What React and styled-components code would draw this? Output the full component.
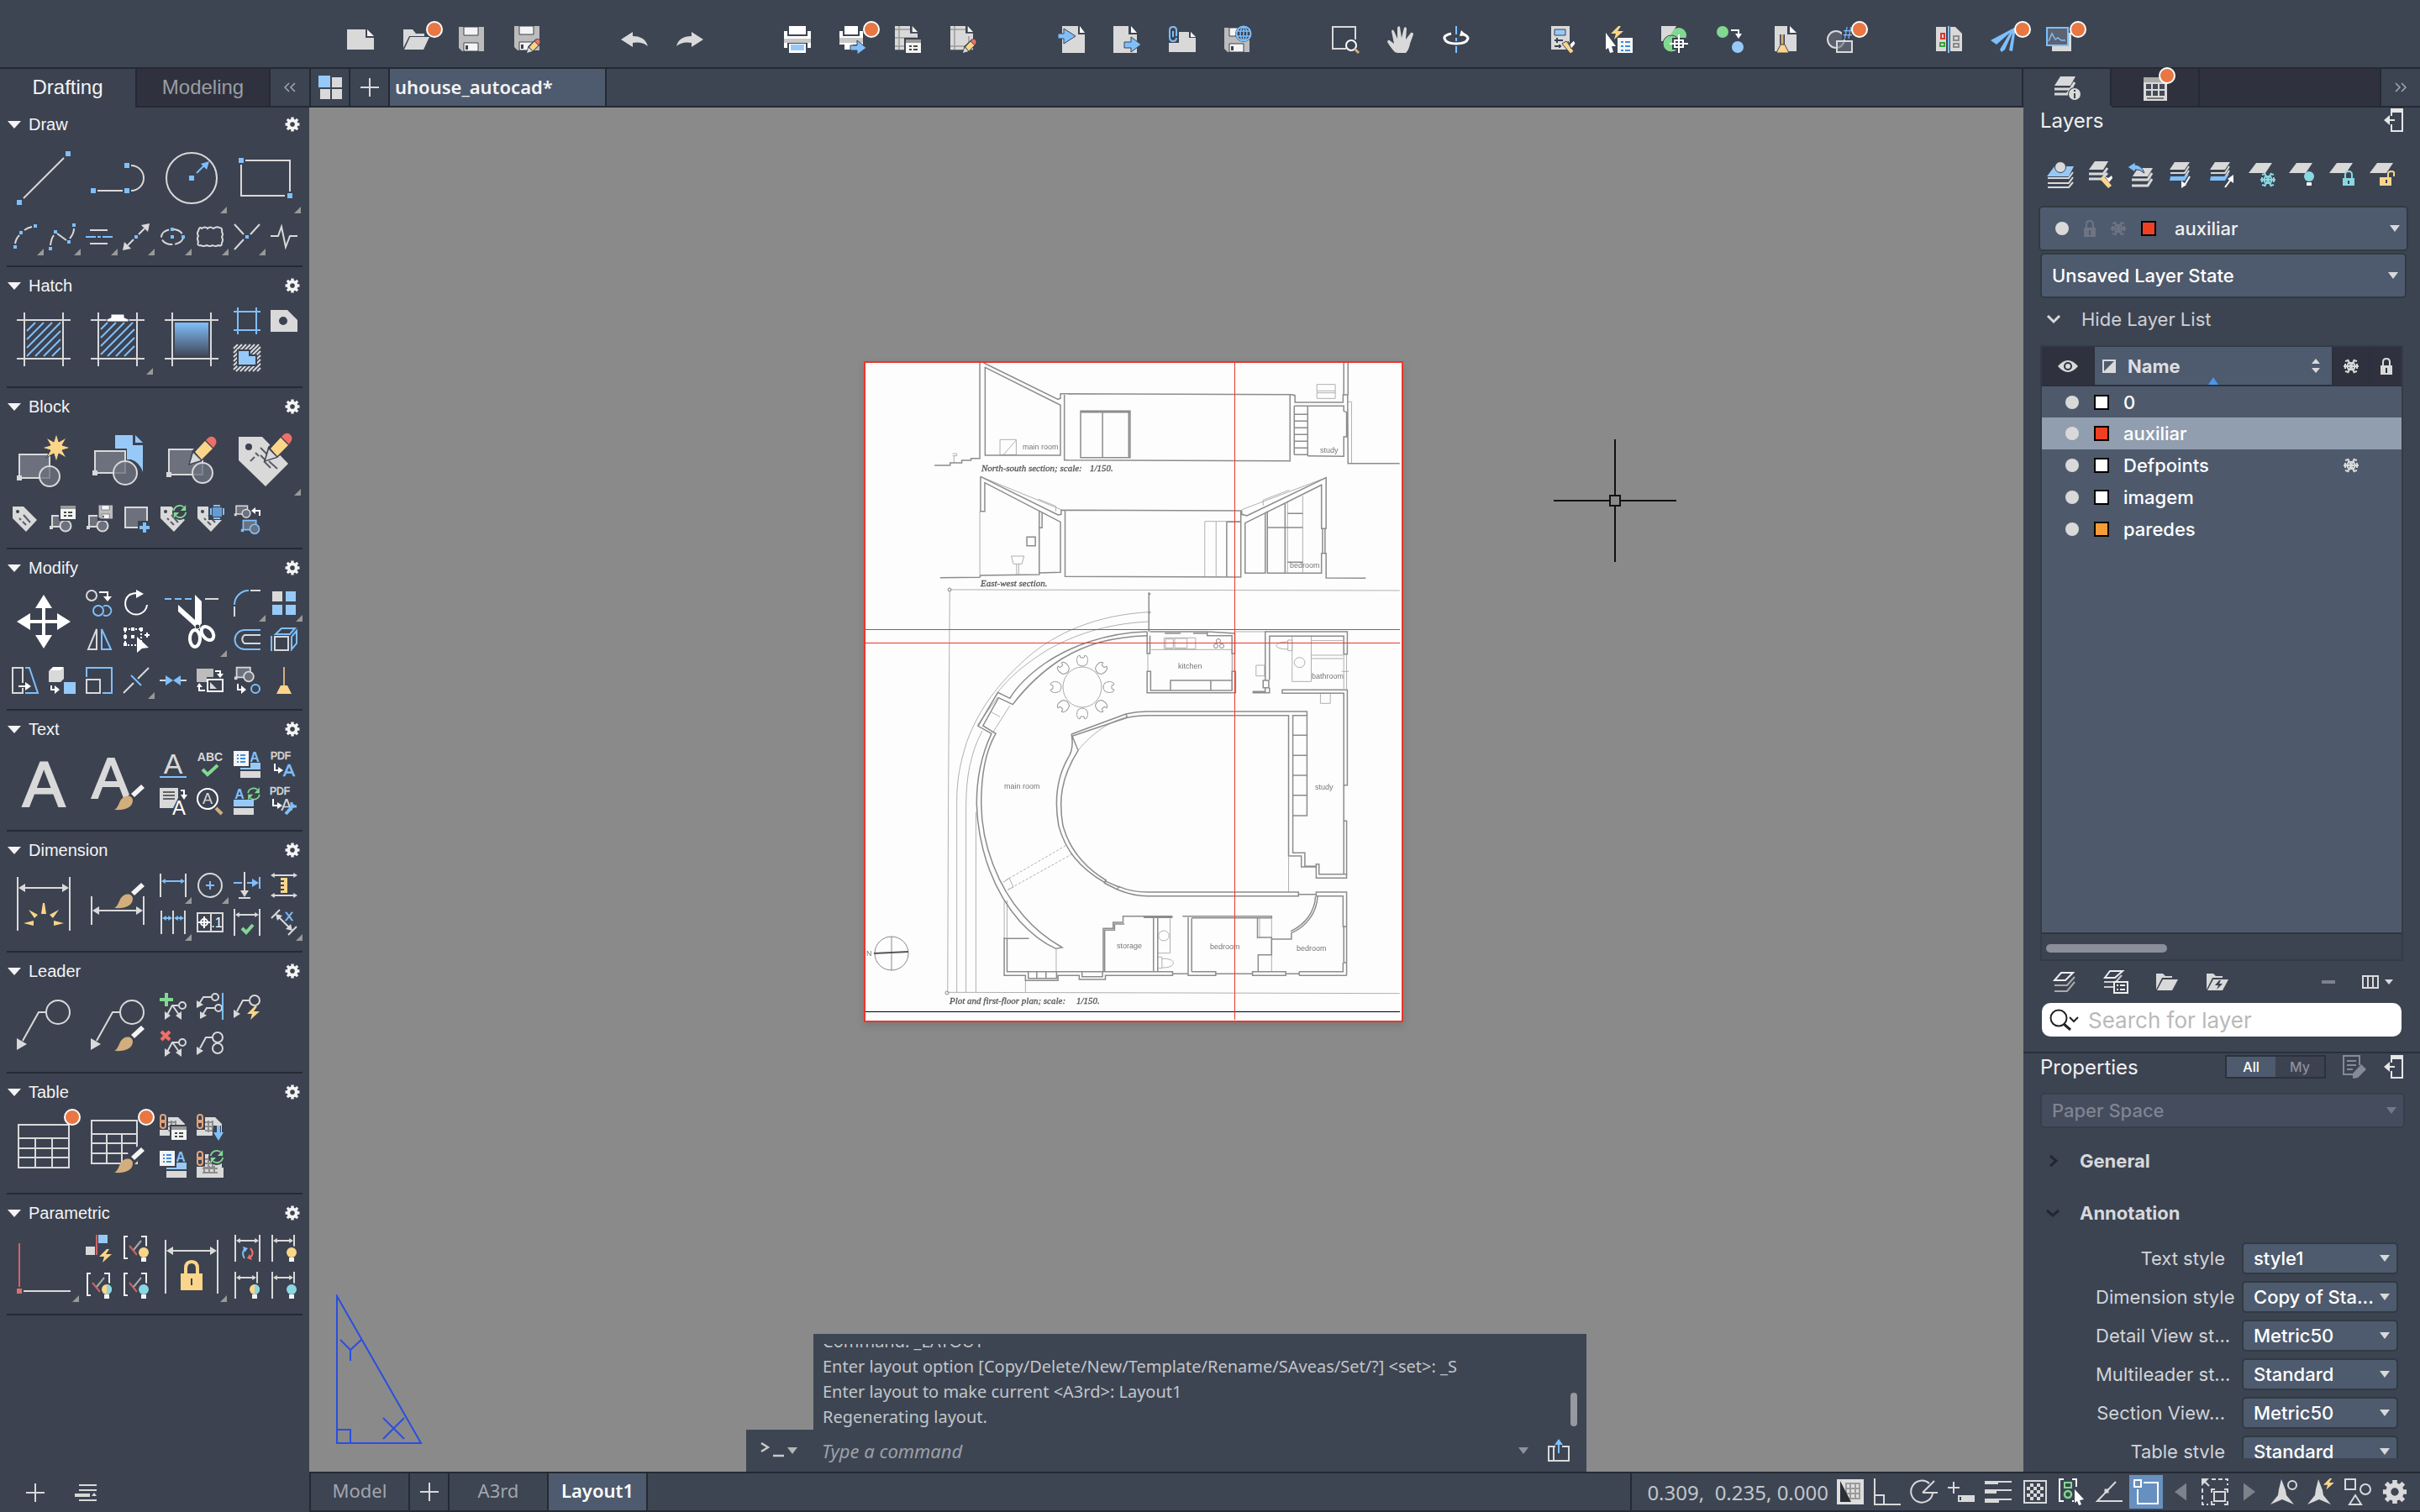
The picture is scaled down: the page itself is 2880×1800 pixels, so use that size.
import React from "react";
import styled, { createGlobalStyle } from "styled-components";

const G = "#d9d9d9";
const B = "#7fbffa";
const L = "#97c9f8";
const W = "#ffffff";
const Y = "#fad58a";
const GR = "#82d891";
const R = "#ee6f6a";
const F = "#6c717d";
const D = "#3c4250";
const T = "#8ad7e2";
const TAN = "#d2ae7c";

/* ---------- drawing helpers ---------- */

const Ln = ({ d, c = G, w = 2, ...rest }) => (
  <path d={d} fill="none" stroke={c} strokeWidth={w} {...rest} />
);
const Fl = ({ d, c = G, ...rest }) => <path d={d} fill={c} {...rest} />;
const Dot = ({ x, y, s = 4, c = B }) => (
  <rect x={x - s / 2} y={y - s / 2} width={s} height={s} fill={c} />
);
const Ltr = ({ x, y, s, c = G, w = 400, children, ...rest }) => (
  <text x={x} y={y} fontSize={s} fontWeight={w} fill={c} textAnchor="middle" fontFamily="Liberation Sans, sans-serif" {...rest}>
    {children}
  </text>
);
const HArrow = ({ x1, x2, y, c = G, h = 4 }) => (
  <>
    <Ln d={`M${x1 + h} ${y}H${x2 - h}`} c={c} />
    <Fl d={`M${x1} ${y}l${h * 1.6} ${-h}v${h * 2}zM${x2} ${y}l${-h * 1.6} ${-h}v${h * 2}z`} c={c} />
  </>
);
const Pencil = ({ t }) => (
  <g transform={t}>
    <Fl d="M-2 34L3 16L21 -1Q28 -4 33 2Q36 8 31 13L14 29Z" c={D} />
    <Fl d="M0 32L4 19L13 28Z" c={G} />
    <Fl d="M6 18L18 5L27 14L14 27Z" c={Y} />
    <Fl d="M19 4L22 1Q27 -2 30 2Q33 6 30 10L28 13Z" c={R} />
  </g>
);
const Brush = ({ t }) => (
  <g transform={t}>
    <Fl d="M19 10L32 -2L38 3L24 18Z" c={D} />
    <Fl d="M0 30C6 27 5 19 11 15C16 12 22 14 22 19C22 27 13 31 0 30Z" c={TAN} />
    <Fl d="M20 11L32 0L36 4L24 15Z" c="#f4f4f4" />
  </g>
);
const Bulb = ({ x, y, c = Y, c2 }) => (
  <g transform={`translate(${x} ${y})`}>
    <circle r="8" fill={D} />
    <circle r="6" fill={c} />
    {c2 && <path d="M0 -6A6 6 0 0 1 0 6Z" fill={c2} />}
    <rect x="-3" y="6" width="6" height="5" fill="#f4f4f4" />
  </g>
);
const Refresh = ({ x, y, a = GR, b = GR, s = 1 }) => (
  <g transform={`translate(${x} ${y}) scale(${s})`}>
    <Ln d="M-8 -1A8 8 0 0 1 5 -6" c={a} />
    <Fl d="M8 -9V-1H1Z" c={a} />
    <Ln d="M8 1A8 8 0 0 1 -5 6" c={b} />
    <Fl d="M-8 9V1H-1Z" c={b} />
  </g>
);
const Bolt = ({ t }) => <Fl d="M9 0L0 9H6L4 16L15 6H8L12 0Z" c={Y} transform={t} />;
const Page = ({ t }) => (
  <g transform={t}>
    <Fl d="M0 0H20V10H30V32H0Z" />
    <Fl d="M23 0L30 8H23Z" c="#f4f4f4" />
  </g>
);
const Snow = ({ c = G }) => (
  <g stroke={c} strokeWidth="2" fill="none">
    <path d="M-9 0H9M-4 -8L4 8M4 -8L-4 8" />
    <path d="M-5 0L-3 -4H3L5 0L3 4H-3Z" />
    <path d="M-7 -3V3M7 -3V3M-7 -6L-3 -7M7 -6L3 -7M-7 6L-3 7M7 6L3 7" />
  </g>
);
const Tag = ({ t, hole = 2 }) => (
  <g transform={t}>
    <Fl d="M1 1H14L30 17L17 31L1 15Z" />
    <circle cx="7" cy="7" r={hole} fill={D} />
    <Ln d="M9 15L11 17M13 19L17 23M14 11L22 20" c="#595d68" />
  </g>
);
const MiniBlock = ({ t, c = G }) => (
  <g transform={t}>
    <Ln d="M4 3H22V16H4Z" c={c} fill={F} />
    <circle cx="20" cy="15" r="6.5" fill={F} stroke={c} strokeWidth="2" />
    <Dot x={3} y={17} s={4} c={c} />
  </g>
);
const Palette = ({ t }) => (
  <g transform={t}>
    <rect x="-2" y="-2" width="22" height="20" fill={D} />
    <rect width="18" height="16" fill="#f4f4f4" />
    <rect width="18" height="4" fill="#999" />
    <Ln d="M4 8H7M9 8H14M4 12H7M9 12H14" c="#4a4a4a" />
  </g>
);
const Floppy = ({ t }) => (
  <g transform={t}>
    <Fl d="M1 1H31V30H5L1 26Z" c="#bcbcbc" />
    <Fl d="M7 1H24V11H7Z" c="#f4f4f4" stroke={D} />
    <Fl d="M7 20H24V30H7Z" c="#f4f4f4" stroke={D} />
    <Fl d="M9 23H12V28H9Z" c={D} />
  </g>
);

const Frame = () => <Ln d="M9 0V64M55 0V64M0 9H64M0 55H64" />;
const hatchLines = (from, step) => {
  let d = "";
  for (let c = from; c < 102; c += step) {
    const a = Math.max(12, c - 52);
    const b = Math.min(52, c - 12);
    d += `M${a} ${b}L${b} ${a}`;
  }
  return d;
};
const Leader = () => (
  <>
    <circle cx="49" cy="17" r="14" fill="none" stroke={G} strokeWidth="2" />
    <Ln d="M34 17H26L7 51" />
    <Fl d="M0 62V48L12 55Z" />
  </>
);
const MiniLeader = ({ t }) => (
  <g transform={t}>
    <circle cx="27" cy="8" r="4" fill="none" stroke={G} strokeWidth="2" />
    <Ln d="M22 8H15L9 19M16 9L23 19" />
    <Fl d="M6 25V15L13 20ZM26 25L19 20L26 15Z" />
  </g>
);
const OneLeader = ({ t, r = 4 }) => (
  <g transform={t}>
    <circle cx="22" cy="5" r={r} fill="none" stroke={G} strokeWidth="2" />
    <Ln d="M17 5H8L3 13" />
    <Fl d="M0 18V9L8 14Z" />
  </g>
);
const Bracket = ({ bulb, half }) => (
  <>
    <Ln d="M6 2H2V28H6M22 2H28V14" c="#eee" />
    <Ln d="M8 13L17 24" c="#cf6461" />
    <Ln d="M13 18L22 7" c="#aaa" />
    <Bulb x={25} y={21} c={bulb} c2={half} />
  </>
);
const DimBulb = ({ bulb, half }) => (
  <>
    <Ln d="M2 0V32M28 0V14" />
    <HArrow x1={3} x2={27} y={7} h={3} />
    <Bulb x={25} y={21} c={bulb} c2={half} />
  </>
);
const Calc = ({ children }) => (
  <>
    <Fl d="M10 4H22L30 12V26H0V19H10Z" />
    <Ln d="M10 10H19M10 15H19M10 20H19M14 8V22M19 8V22" c="#8d8d8d" />
    <rect x="-1" y="-1" width="10" height="20" rx="4" fill={D} />
    <rect x="1" y="1" width="6" height="9" rx="3" fill="none" stroke="#e2a47c" strokeWidth="2" />
    <rect x="1" y="8" width="6" height="9" rx="3" fill="none" stroke="#e2a47c" strokeWidth="2" />
    {children}
  </>
);
const TextBars = ({ t }) => (
  <g transform={t}>
    <Ltr x={25} y={13} s={16} c={B} w={700}>A</Ltr>
    <Fl d="M8 14H32V22H8Z" c={L} />
    <Fl d="M8 24H32V32H8Z" />
    <rect width="20" height="20" fill={D} />
    <rect width="18" height="18" fill="#f4f4f4" />
    <Ln d="M4 5H6M8 5H14M4 9H6M8 9H14M4 13H6M8 13H14" c="#3d8ee0" />
  </g>
);
const Sheet = ({ c = G, x = 0, y = 0 }) => <Fl d={`M${x + 9} ${y}H${x + 28}L${x + 20} ${y + 12}H${x}Z`} c={c} />;
const Sheets = ({ top = G, bottom = G }) => (
  <>
    <Fl d="M8 1H26L20 10H2Z" c={top} />
    <Ln d="M25 6L20 14H3M25 11L20 19H3" />
    <Fl d="M3 18H19L25 15L20 23H2Z" c={bottom} />
  </>
);

/* ---------- tool glyphs, 64 or 32 units wide ---------- */

const art = {
  line: <><Ln d="M8 56L56 8" /><Dot x={3} y={61} s={6} /><Dot x={61} y={3} s={6} /></>,
  polyline: <><Ln d="M8 47H38M48 17A15 15 0 0 1 48 47" /><Dot x={3} y={47} s={6} /><Dot x={43} y={47} s={6} /><Dot x={43} y={17} s={6} /></>,
  circle: <><circle cx="32" cy="32" r="30" fill="none" stroke={G} strokeWidth="2" /><Dot x={32} y={32} s={6} /><Ln d="M38 26L47 17" c={B} /><Fl d="M53 12L50 22L43 15Z" c={B} /></>,
  rect: <><Ln d="M8 11H61V48M3 16V53H55" /><Dot x={3} y={11} s={6} /><Dot x={61} y={53} s={6} /></>,
  arc: <><Ln d="M4 24Q5 18 9 14M15 8Q19 5 24 4" /><Dot x={4} y={28} /><Dot x={11} y={11} /><Dot x={28} y={3} /></>,
  spline: <><Ln d="M2 26Q3 18 6 14M10 12L21 20M25 18Q30 12 30 6" /><Dot x={2} y={30} /><Dot x={8} y={10} /><Dot x={24} y={22} /><Dot x={30} y={2} /></>,
  xline: <><Ln d="M5 8H26M5 24H26" /><Ln d="M0 16H12M14 16H18M20 16H32" c={B} /></>,
  ray: <><Ln d="M6 26L13 19M19 13L26 6" /><Fl d="M0 32L2 22L10 30ZM32 0L30 10L22 2Z" /><Dot x={16} y={16} /></>,
  ellipse: <><ellipse cx="15" cy="16" rx="13" ry="9" fill="none" stroke={G} strokeWidth="2" strokeDasharray="14 3" /><Dot x={15} y={16} /><Dot x={15} y={7} /><Dot x={28} y={16} /></>,
  cloud: <Ln d="M3 6Q4 4 6 6Q10 3 13 6Q16 3 20 6Q24 3 27 5Q31 5 30 10Q32 13 30 16Q32 20 30 23Q30 28 26 26Q22 28 19 26Q16 28 12 26Q8 28 5 26Q0 27 2 22Q0 18 2 15Q0 11 2 9Z" />,
  ex: <><Ln d="M1 1L12 13M31 1L20 13M1 31L12 19" /><Dot x={16} y={16} /></>,
  breakline: <Ln d="M0 15H9L13 4L18 28L23 15H32" />,

  hatch: <><Frame /><Ln d={hatchLines(34, 10)} c={B} /></>,
  hatch2: <><Frame /><Fl d="M19 11V8L24 6V2H40V6L45 8V11Z" c={W} stroke={D} strokeWidth="1" /><Ln d={hatchLines(32, 10)} c={B} /></>,
  gradient: (
    <>
      <defs>
        <linearGradient id="fade" x1="0" y1="0" x2="0" y2="1">
          <stop offset="0" stopColor={B} />
          <stop offset="1" stopColor="#414857" />
        </linearGradient>
      </defs>
      <Frame />
      <rect x="12" y="12" width="40" height="40" fill="url(#fade)" />
    </>
  ),
  boundary: <Ln d="M5 0V32M27 0V32M0 5H32M0 27H32" c={B} />,
  wipeout: <Fl d="M0 3H20L32 15V29H0ZM15 11A5 5 0 1 0 15 21A5 5 0 1 0 15 11Z" fillRule="evenodd" />,
  region: (
    <>
      <Ln d="M0 5L5 0M0 10L10 0M0 15L15 0M0 20L20 0M0 25L25 0M0 30L30 0M3 32L32 3M8 32L32 8M13 32L32 13M18 32L32 18M23 32L32 23M28 32L32 28" />
      <Fl d="M4 6H20V12H28V26H4Z" c={D} />
      <Fl d="M6 8H18V14H26V24H6Z" c={L} />
    </>
  ),

  insert: (
    <>
      <Ln d="M3 25H39V53H3Z" fill={F} />
      <Dot x={3} y={53} s={6} c={G} />
      <circle cx="39" cy="51" r="12" fill={F} fillOpacity=".8" stroke={G} strokeWidth="2" />
      <Fl d="M47 0L50 10L59 5L54 14L64 17L54 20L59 29L50 24L47 34L44 24L35 29L40 20L30 17L40 14L35 5L44 10Z" c={Y} stroke={D} strokeWidth="1" />
    </>
  ),
  create: (
    <>
      <Fl d="M29 2H50V14H62V46Q58 34 48 31H43V18H29Z" c={L} />
      <Fl d="M53 2L62 11H53Z" c={L} />
      <Ln d="M5 21H41V47H5Z" fill={F} />
      <Dot x={5} y={47} s={6} c={G} />
      <circle cx="41" cy="47" r="14" fill={F} fillOpacity=".8" stroke={G} strokeWidth="2" />
    </>
  ),
  editblock: (
    <>
      <Ln d="M5 19H45V49H5Z" fill={F} />
      <Dot x={5} y={49} s={6} c={G} />
      <circle cx="45" cy="47" r="12" fill={F} fillOpacity=".8" stroke={G} strokeWidth="2" />
      <Pencil t="translate(30 4)" />
    </>
  ),
  attredit: (
    <>
      <Fl d="M0 4H28L59 36L32 63L0 32Z" />
      <circle cx="12" cy="16" r="4" fill={D} />
      <Ln d="M26 17L34 25M20 23L24 27M30 33L38 41M14 33L19 28M26 26L32 32M36 33L46 42" c="#595d68" />
      <Pencil t="translate(32 0)" />
    </>
  ),
  tag: <Tag />,
  blockpal: <><MiniBlock t="translate(0 9)" /><Palette t="translate(14 0)" /></>,
  blocksave: <><MiniBlock t="translate(0 9)" /><rect x="14" y="-2" width="20" height="20" fill={D} /><Floppy t="translate(15 -1) scale(.55)" /></>,
  blockadd: <><Ln d="M3 2H29V26H3Z" fill={F} /><Fl d="M18 18H33V33H18Z" c={D} /><Ln d="M26 20V32M20 26H32" c={B} w={4} /></>,
  tagsync: <><Tag /><circle cx="24" cy="8" r="9" fill={D} /><Refresh x={24} y={7} s={0.9} /></>,
  tagsel: <><Tag /><rect x="14" y="-1" width="20" height="18" fill={D} /><rect x="19" y="2" width="11" height="11" fill="#659bd3" /><Ln d="M20 0H28M20 15H28M17 3V11M32 3V11" c={B} /></>,
  blockswap: <><g transform="translate(0 -2) scale(.75)"><MiniBlock /></g><Ln d="M31 12V6H26" c={W} /><Fl d="M21 6L26 2V10Z" c={W} /><MiniBlock t="translate(8 15) scale(.85)" c={B} /></>,

  move: <><Ln d="M32 12V52M12 32H52" c={W} w={4} /><Fl d="M32 0L42 16H22ZM32 64L22 48H42ZM0 32L16 22V42ZM64 32L48 42V22Z" c={W} /></>,
  copy: <><circle cx="7" cy="7" r="6" fill="none" stroke={G} strokeWidth="2" /><Ln d="M16 3H26V9" c={W} /><Fl d="M21 8H31L26 14Z" c={W} /><circle cx="15" cy="25" r="6" fill="none" stroke={B} strokeWidth="2" /><Ln d="M21 20A6 6 0 1 1 21 30" c={B} /></>,
  rotate: <><Ln d="M10 5A13 13 0 1 0 29 18" c={W} /><Ln d="M9 6Q12 4 17 4" c={W} /><Fl d="M16 0L25 5L16 10Z" c={W} /></>,
  mirror: <><Ln d="M13 3V27H3Z" /><Ln d="M19 3L30 27H19Z" c={B} /></>,
  stretchsel: <><Ln d="M3 3H22V22H3Z" c={W} strokeDasharray="2 2" /><Dot x={3} y={3} c={W} /><Dot x={12} y={3} c={W} /><Dot x={22} y={3} c={W} /><Dot x={3} y={12} c={W} /><Dot x={12} y={12} c={W} /><Dot x={3} y={21} c={W} /><Ln d="M26 10H32M29 7V13" c={W} /><Fl d="M17 12L31 25L23 26L17 31Z" c={W} /></>,
  trim: (
    <>
      <Ln d="M0 5H8M12 5H20M24 5H32" c={B} />
      <Ln d="M48 5H64" />
      <Fl d="M36 0L44 8V34L38 42L36 38L16 20V12L36 30Z" c={W} />
      <ellipse cx="36" cy="52" rx="6" ry="10" fill="none" stroke={W} strokeWidth="4" />
      <ellipse cx="51" cy="46" rx="6" ry="9" transform="rotate(-38 51 46)" fill="none" stroke={W} strokeWidth="4" />
      <circle cx="39" cy="38" r="3" fill={D} stroke={W} />
    </>
  ),
  fillet: <><Ln d="M1 18A17 17 0 0 1 18 1" c={B} /><Ln d="M20 1H32M1 20V32" /></>,
  array: <><Fl d="M2 2H14V14H2Z" /><Fl d="M18 2H30V14H18ZM2 18H14V30H2ZM18 18H30V30H18Z" c={L} /></>,
  offset: <><Ln d="M32 4H13A11 11 0 0 0 13 27H32" c={B} /><Ln d="M32 10H13A6 6 0 0 0 13 20H32" /></>,
  extrude: <><Ln d="M5 12H21V28H5Z" /><Ln d="M1 11V29M6 9L13 2H29L23 9ZM25 27V12L31 5V20Z" c={B} /></>,
  stretch: <><Ln d="M13 19V1H1V31H13V25" /><Ln d="M16 1H21L31 31H16" c={B} /><Ln d="M8 23H18" c={W} /><Fl d="M16 18L23 23L16 28Z" c={W} /></>,
  cube: <><Fl d="M0 5L5 1H18V14L14 18H0Z" /><Fl d="M1 4L5 0H18L14 4Z" c="#fff" /><Ln d="M3 22V27H8" c={W} /><Fl d="M7 22L13 27L7 32Z" c={W} /><Fl d="M18 18H32V32H18Z" c={L} /></>,
  scale: <><Ln d="M1 12V1H31V31H20" c={B} /><Ln d="M1 15H17V31H1Z" /></>,
  lengthen: <><Ln d="M1 31L13 19M18 14L31 1" /><Ln d="M10 10L22 22" c={B} /></>,
  join: <><Ln d="M0 16H8M24 16H32" /><Fl d="M7 10L16 16L7 22ZM25 10L16 16L25 22Z" c={B} /></>,
  align: <><Fl d="M0 2H20V12H12V18H0Z" c="#bcbcbc" /><Ln d="M22 5H28V9" c={W} /><Fl d="M24 8H32L28 13Z" c={W} /><Ln d="M13 15H31V29H13Z" c={W} /><Fl d="M16 18L24 26H16Z" /><Ln d="M3 23V28H10" c={W} /><Fl d="M0 24L3 19L7 24Z" c={W} /></>,
  explode: <><g transform="translate(0 -2) scale(.9)"><MiniBlock /></g><Ln d="M5 20V27H10" c={W} /><Fl d="M9 22L15 27L9 32Z" c={W} /><circle cx="26" cy="26" r="5" fill="none" stroke={B} strokeWidth="2" /></>,
  purge: <><Ln d="M16 0V22" c={TAN} /><Fl d="M12 22H20L25 32H7Z" c={Y} /></>,

  mtext: <Ltr x={32} y={60} s={76} stroke={G} strokeWidth="2">A</Ltr>,
  textstyle: <><Ltr x={24} y={50} s={68} stroke={G} strokeWidth="2">A</Ltr><path d="M40 54L60 26L66 36L44 66Z" fill={D} /><Brush t="translate(28 34)" /></>,
  textA: <><Ltr x={16} y={27} s={34} c={G}>A</Ltr><Ln d="M0 31H32" c={B} /></>,
  spell: <><Ltr x={16} y={12} s={14} w={700}>ABC</Ltr><Ln d="M7 22L13 28L25 17" c={GR} w={4} /></>,
  field: <TextBars />,
  pdftext: <><Ltr x={12} y={10} s={12} stroke={G} strokeWidth=".6">PDF</Ltr><Ln d="M5 15V23H9" c={W} /><Fl d="M9 19L15 23L9 27Z" c={W} /><Ltr x={22} y={30} s={21} c={B} stroke={B} strokeWidth=".6">A</Ltr></>,
  singletext: <><Fl d="M0 0H22V12L16 24H0Z" /><Ln d="M4 5H18M4 9H18M4 13H18" c="#5f6168" /><Ln d="M25 3H29V8" c={W} /><Fl d="M25 8H33L29 14Z" c={W} /><Ltr x={23} y={32} s={24} c={W}>A</Ltr></>,
  findtext: <><circle cx="13" cy="13" r="12" fill="none" stroke={W} strokeWidth="2" /><Ltr x={13} y={19} s={18}>A</Ltr><Ln d="M23 24L30 31" c={TAN} w={4} /></>,
  fieldupd: <><Ltr x={7} y={13} s={16} c={B} w={700}>A</Ltr><Refresh x={24} y={7} s={0.85} /><Fl d="M0 14H24V22H0Z" c={L} /><Fl d="M0 24H24V32H0Z" /></>,
  pdfset: <><Ltr x={11} y={8} s={12} stroke={G} strokeWidth=".6">PDF</Ltr><Ln d="M3 13V21H8" c={W} /><Fl d="M8 17L14 21L8 25Z" c={W} /><Ltr x={19} y={27} s={20} c={G}>A</Ltr><Ln d="M18 31L28 20" c={B} w={4} /><Ln d="M25 17V22H31" c={B} w={3} /></>,

  dim: <><Ln d="M1 0V64M63 0V64" /><HArrow x1={2} x2={62} y={13} h={5} /><Fl d="M31 31H33L35 44H29ZM14 39L25 45L21 49ZM50 39L39 45L43 49ZM8 55L20 52V58ZM56 55L44 52V58Z" c={Y} /></>,
  dimstyle: <><Ln d="M1 23V57M63 23V57" /><HArrow x1={2} x2={62} y={40} h={5} /><Brush t="translate(28 7)" /></>,
  linear: <><Ln d="M1 2V30M31 2V30" /><HArrow x1={2} x2={30} y={11} c={B} h={3} /></>,
  center: <><circle cx="16" cy="16" r="14" fill="none" stroke={G} strokeWidth="2" /><Ln d="M11 16H21M16 11V21" c={B} /></>,
  dimspace: <><Ln d="M13 0V24M6 31H20" /><Fl d="M8 22H18L13 30Z" /><Ln d="M0 13H10M16 13H26M31 6V20" c={B} /><Fl d="M22 8L30 13L22 18Z" c={B} /></>,
  dimruler: <><HArrow x1={0} x2={32} y={4} h={3} /><HArrow x1={0} x2={32} y={28} h={3} /><Fl d="M12 7H20V25H12Z" c={Y} /><Ln d="M12 11H16M12 16H16M12 21H16" c={D} /></>,
  baseline: <><Ln d="M2 2V30M16 2V30M30 2V30" /><HArrow x1={3} x2={15} y={11} c={B} h={3} /><HArrow x1={17} x2={29} y={11} c={B} h={3} /></>,
  tolerance: <><Ln d="M1 5H31V27H1ZM17 5V27" /><circle cx="9" cy="16" r="4" fill="none" stroke={W} strokeWidth="2" /><Ln d="M2 16H16M9 9V23" c={W} /><Ltr x={24} y={22} s={16} c={W}>.1</Ltr></>,
  inspect: <><Ln d="M1 0V32M31 0V32" /><HArrow x1={2} x2={30} y={7} h={3} /><Ln d="M10 23L15 28L23 19" c={GR} w={4} /></>,
  oblique: <><Ln d="M1 11L11 1M21 31L31 21M9 9L23 23" /><Fl d="M6 6L14 8L8 14ZM26 26L24 18L18 24Z" /><Ltr x={22} y={14} s={15} c={B} stroke={B} strokeWidth=".6">X</Ltr></>,

  leader: <Leader />,
  leaderstyle: <><Leader /><Brush t="translate(28 33)" /></>,
  leadadd: <><Ln d="M8 0V16M0 8H16" c={GR} w={4} /><MiniLeader t="translate(0 7)" /></>,
  leadalign: <><OneLeader /><OneLeader t="translate(4 13)" /><Ln d="M31 0V32" c={B} /></>,
  leadcollect: <><Ln d="M18 9H11L4 22" /><Fl d="M0 30V20L8 25Z" /><circle cx="25" cy="9" r="6" fill="none" stroke={G} strokeWidth="2" /><Bolt t="translate(16 16)" /></>,
  leaddel: <><Ln d="M2 2L12 12M12 2L2 12" c={R} w={4} /><MiniLeader t="translate(0 7)" /></>,
  leadgroup: <><Ln d="M19 9H11L4 22" /><Fl d="M0 30V20L8 25Z" /><circle cx="25" cy="9" r="6" fill="none" stroke={G} strokeWidth="2" /><circle cx="25" cy="22" r="6" fill="none" stroke={G} strokeWidth="2" /></>,

  table: <Ln d="M2 7H62V58H2ZM2 23H62M2 35H62M2 46H62M22 23V58M42 23V58" />,
  tablestyle: <><Ln d="M1 2H55V53H1ZM1 18H55M1 29H55M1 41H55M19 18V53M37 18V53" /><Fl d="M44 40L60 30L66 40L50 56Z" c={D} /><Brush t="translate(28 34)" /></>,
  link: <Calc><Palette t="translate(14 15)" /></Calc>,
  download: <Calc><Fl d="M20 14H29V32H18Z" c={D} /><Ln d="M26 14V23" c={B} w={4} /><Fl d="M20 22H32L26 32Z" c={B} /></Calc>,
  extract: <TextBars />,
  tableupd: <Calc><circle cx="24" cy="7" r="10" fill={D} /><Refresh x={24} y={7} s={0.9} /><Fl d="M0 20H32V32H0Z" /><Ln d="M7 21H25M7 26H25M9 18V26M15 18V26M21 18V26" c="#8d8d8d" /></Calc>,

  perp: <><Ln d="M3 4V56" c="#cf6461" /><Dot x={3} y={61} s={6} c="#dd6f6b" /><Ln d="M8 61H64" /></>,
  autocon: <><Fl d="M0 14H11V24H0Z" /><Fl d="M15 0H26V10H15Z" c={L} /><Ln d="M13 0V24" c="#cf6461" /><Bolt t="translate(16 17)" /></>,
  conshow: <Bracket bulb={Y} />,
  conhalf: <Bracket bulb={Y} half={T} />,
  conhide: <Bracket bulb={T} />,
  dimlock: <><Ln d="M1 0V64M63 0V64" /><HArrow x1={2} x2={62} y={13} h={5} /><Ln d="M25 41V34Q25 26 32 26T39 34V41" c={Y} w={4} /><Fl d="M19 40H45V60H19Z" c={Y} /><Fl d="M31 46H33V54H31Z" c={D} /></>,
  dimconv: <><Ln d="M2 0V32M31 0V32" /><HArrow x1={3} x2={30} y={7} h={3} /><Ln d="M13 17Q9 22 13 28" c={B} /><Fl d="M11 14L17 16L13 21Z" c={B} /><Ln d="M20 16Q25 22 20 27" c={R} /><Fl d="M22 30L16 28L19 23Z" c={R} /></>,
  dimshow: <DimBulb bulb={Y} />,
  dimhalf: <DimBulb bulb={Y} half={T} />,
  dimhide: <DimBulb bulb={T} />,

  /* top toolbar */
  newfile: <><Fl d="M0 4H22V14H32V28H0Z" /><Fl d="M24 4L32 12H24Z" c="#f4f4f4" /></>,
  open: <><Fl d="M1 4H12L16 9H26V12H8L1 26Z" /><Fl d="M9 13H32L25 28H2Z" /></>,
  save: <Floppy />,
  saveas: <><Floppy t="translate(0 -1)" /><Pencil t="translate(16 16) scale(.5)" /></>,
  undo: <Fl d="M0 16L14 7V12Q29 12 32 24Q25 18 14 20V25Z" />,
  redo: <Fl d="M32 16L18 7V12Q3 12 0 24Q7 18 18 20V25Z" />,
  print: <><Fl d="M6 0H26V10H6Z" c={W} /><Fl d="M0 6H4V12H28V6H32V26H28V20H4V26H0Z" c={W} /><Fl d="M0 15H32V20H0Z" c="#c9c9c9" /><Fl d="M6 21H26V32H6Z" c={W} /><Fl d="M8 22H24V29H8Z" c={L} /></>,
  batch: <><Fl d="M6 0H22V10H6Z" c={W} /><Fl d="M0 6H4V12H24V6H28V22H0Z" c={W} /><Fl d="M0 14H28V20H0Z" c="#c9c9c9" /><Fl d="M6 20H16V28H6Z" c={W} /><Fl d="M13 23H21V17L32 26L21 34V29H13Z" c={B} stroke={D} /></>,
  pagesetup: <><Page t="translate(0 0) scale(.9 .88)" /><Ln d="M0 4H18M5 0V28M0 24H14M0 14H26" c="#9b9b9b" w={1.5} /><Palette t="translate(13 16)" /></>,
  layoutedit: <><Page t="translate(0 0) scale(.9 .88)" /><Ln d="M0 4H18M5 0V28M0 24H18M22 12V26" c="#9b9b9b" w={1.5} /><Pencil t="translate(15 16) scale(.5)" /></>,
  importf: <><Fl d="M5 0H24V10H32V32H5Z" /><Fl d="M26 0L32 8H26Z" c={W} /><Fl d="M0 9H7V3L21 12L7 21V15H0Z" c={B} stroke={D} /></>,
  exportf: <><Fl d="M0 0H18V10H28V32H0Z" /><Fl d="M21 0L28 8H21Z" c={W} /><Fl d="M13 19H21V13L33 22L21 31V26H13Z" c={B} stroke={D} /></>,
  attach: <><Fl d="M0 20H12V7H24V14H32V31H0Z" /><Fl d="M26 7L32 13H26Z" c={W} /><Ln d="M9 12V5Q9 1 5 1T1 5V13Q1 18 5 18T9 14M5 13V6" c={B} /></>,
  saveweb: <><Floppy t="translate(-1 1)" /><circle cx="23" cy="9" r="10" fill={D} /><circle cx="23" cy="9" r="8.5" fill="none" stroke={B} strokeWidth="2" /><ellipse cx="23" cy="9" rx="4" ry="8" fill="none" stroke={B} strokeWidth="1.5" /><Ln d="M15 6H31M15 12H31M23 1V17" c={B} w={1.5} /></>,
  zoomwin: <><Ln d="M17 27H1V1H28V16" /><circle cx="23" cy="23" r="6" fill="none" stroke={W} strokeWidth="2" /><Ln d="M27 27L32 32" c={TAN} w={3} /></>,
  pan: <Fl d="M9 31Q5 27 0 19Q1 15 4 18L8 21L5 6Q6 3 8 6L12 15L12 2Q13 -1 15 1L17 14L20 2Q22 0 23 3L22 16L28 8Q31 7 31 10L27 21Q26 28 22 32H12Z" />,
  orbit: <><Ln d="M16 0V10M16 14V18M16 24V32" c={B} /><Ln d="M10 9Q1 11 2 15Q4 21 16 21T30 15Q30 11 22 9" c={W} w={3} /><Fl d="M20 12L22 5L28 11Z" c={W} /></>,
  props: <><Fl d="M1 0H23V28H1Z" /><Fl d="M5 4H18V11H5Z" c={L} stroke={D} /><Ln d="M5 17H15M8 14V20M5 24H13M11 22V26" c={D} /><Fl d="M14 21L19 18L28 30L24 33Z" c={Y} stroke={D} strokeWidth="1" /><Fl d="M21 18L23 22L28 17L30 21L25 27Z" c={W} stroke={D} strokeWidth="1" /></>,
  qselect: <><Bolt t="translate(6 0)" /><Fl d="M0 8L12 24L7 24L9 31L5 32L3 26L0 28Z" c={W} /><Fl d="M14 14H32V32H14Z" c="#f4f4f4" /><Ln d="M18 19H21M23 19H29M18 24H21M23 24H29M18 29H21M23 29H29" c="#3d8ee0" /></>,
  addsel: <><Fl d="M0 0H18L8 18H0Z" /><circle cx="21" cy="11" r="9" fill={GR} /><circle cx="12" cy="21" r="10" fill={GR} stroke={D} strokeWidth="1" /><Fl d="M13 14H29V28H13Z" c={D} /><Ln d="M21 10V32M10 21H32M16 17H26V25H16Z" c={W} /></>,
  replace: <><circle cx="7" cy="7" r="7" fill={GR} /><Ln d="M17 5H26V10" c={W} /><Fl d="M22 9H30L26 15Z" c={W} /><circle cx="25" cy="25" r="7" fill={L} /></>,
  audit: <><Fl d="M3 0H18V10H29V30H3Z" /><Fl d="M21 0L29 8H21Z" c={W} /><Ln d="M12 10V22" c={D} w={6} /><Ln d="M12 10V22" c={TAN} w={3} /><Fl d="M10 22H15L20 32H5Z" c={Y} stroke={D} strokeWidth="1" /></>,
  count: <><circle cx="10" cy="16" r="10" fill={F} fillOpacity=".6" stroke={G} strokeWidth="2" /><Ln d="M11 18H29V31H11Z" fill={F} fillOpacity=".6" /><Fl d="M17 0H31V16H17Z" c={D} /><Ltr x={24} y={15} s={20} c={B}>#</Ltr></>,
  compare: <><Fl d="M1 1H13V30H1Z" /><Fl d="M18 1H24L32 9V30H18Z" /><Ln d="M16 0V32" c={B} /><Ln d="M7 9H11V15H7Z" c="#e5352c" /><Ln d="M6 20H11V24H6Z" c="#38a338" /><Ln d="M22 12H28V17H22ZM22 21H28V25H22Z" c="#8b8b8b" /></>,
  share: <Fl d="M0 17L30 1L26 30L22 29L26 8L17 28L13 31L11 28L23 8L7 22Z" c={B} />,
  activity: <><Fl d="M7 8H30V30H7Z" /><Ln d="M1 2H26V23H1Z" c={B} fill="#5c6371" /><Ln d="M3 18L7 9L11 16L14 14L18 17H23" c={B} w={1.5} /></>,

  /* layer toolbar */
  lyset: <><Fl d="M9 6H32L26 18H0Z" c={L} /><Ln d="M31 13L26 20H1M31 19L26 26H1M31 25L26 31H1" /><circle cx="16" cy="7" r="6.5" fill={G} stroke={D} strokeWidth="1" /></>,
  lymatch: <><Fl d="M9 0H25L19 10H2Z" /><Ln d="M24 8L19 15H2M24 14L17 21H2" w={3} /><Fl d="M15 21L20 18L29 29L25 32Z" c={Y} /><Fl d="M21 18L25 20L29 17L30 20L26 25Z" c={W} /></>,
  lyprev: <><Fl d="M12 8H30L24 18H6Z" /><Fl d="M0 7L9 1V4Q17 5 20 14Q14 9 9 10V13Z" c={B} stroke={D} strokeWidth="1" /><Ln d="M29 14L24 22H5M29 21L24 29H5" w={3} /></>,
  lyiso: <><Sheets bottom={B} /><Ln d="M26 18L20 28" c={W} /><Fl d="M16 32V23L22 28Z" c={W} /></>,
  lyuniso: <><Sheets bottom={B} /><Ln d="M28 20L20 31" c={W} /><Fl d="M30 16V26L23 21Z" c={W} /></>,
  lyfreeze: <><Sheet y={2} /><g transform="translate(23 22)"><Snow c={T} /></g></>,
  lyoff: <><Sheet y={2} /><circle cx="24" cy="18" r="6" fill={T} /><Fl d="M21 25H27V29H21Z" c="#f4f4f4" /></>,
  lylock: <><Sheet y={2} /><Ln d="M19 20V16Q19 12 23 12T27 16V20" c={T} /><Fl d="M16 20H30V29H16Z" c={T} /><Fl d="M22 23H24V27H22Z" c={D} /></>,
  lyunlock: <><Sheet y={2} /><Ln d="M22 20V15Q22 12 26 12T29 15V18" c={Y} /><Fl d="M12 19H26V29H12Z" c={Y} /><Fl d="M19 22H21V26H19Z" c={D} /></>,

  /* status bar */
  grid: <><Fl d="M0 1H32V31H0Z" c="#dedede" /><Ln d="M10 6H28M10 12H28M12 18H28M14 24H28M11 5V25M16 5V25M22 5V25M27 5V25" c="#9b9b9b" /><Fl d="M4 3L17 28H4Z" c="#2c2f38" /></>,
  ortho: <Ln d="M1 0V31H32M1 20H12V31" />,
  polar: <><Ln d="M22 6A13 13 0 1 0 26 18M14 17L28 3M14 17H32" /></>,
  dyn: <><Ln d="M0 11H14M7 4V18" /><Fl d="M12 20H32V28H12Z" /><Ln d="M15 22V26" c={D} /></>,
  lwt: <><Fl d="M0 3H16V7H0ZM0 13H14V18H0ZM0 24H17V29H0Z" /><Ln d="M16 4H32M14 14H32M17 25H32" /></>,
  transp: <><Ln d="M3 3H29V29H3Z" /><Fl d="M10 6h4v4h-4zM18 6h4v4h-4zM6 10h4v4h-4zM14 10h4v4h-4zM22 10h4v4h-4zM10 14h4v4h-4zM18 14h4v4h-4zM6 18h4v4h-4zM14 18h4v4h-4zM22 18h4v4h-4zM10 22h4v4h-4zM18 22h4v4h-4z" /></>,
  cycle: <><Ln d="M6 1H1V27H6M16 1H21V10M16 27H18" c={W} /><Ln d="M7 5H15V11H7Z" c={GR} /><circle cx="11" cy="19" r="4" fill="none" stroke={GR} strokeWidth="2.5" /><Fl d="M19 13L30 25L25 26L27 31L24 32L22 27L19 29Z" c={W} /></>,
  otrack: <><Ln d="M32 27H2L24 4" /><Dot x={13} y={15} s={5} c={G} /></>,
  osnap: <><Ln d="M2 2H10V10H2Z" c={W} /><Ln d="M13 5H30V30H6V13" c={W} /></>,
  prevv: <Fl d="M14 2V30L0 16Z" c="#7d828c" />,
  nextv: <Fl d="M0 2V30L14 16Z" c="#7d828c" />,
  maxv: <><Ln d="M12 1H31V8M1 12V31H8" strokeDasharray="5 3" /><Fl d="M0 0H9L0 9Z" /><Ln d="M3 3L9 9M12 17V13H16M27 13H31V17M12 27V31H16M31 27V31H27" /><Ln d="M15 16H28V27H15Z" /></>,
  annvis: <><Fl d="M13 1L18 14L19 20L28 31L14 25L0 31L9 20L10 13Z" /><circle cx="26" cy="8" r="5" fill="none" stroke={G} strokeWidth="2" /></>,
  annauto: <><Fl d="M13 1L18 14L19 20L28 31L14 25L0 31L9 20L10 13Z" /><Bolt t="translate(19 0) scale(.85)" /></>,
  isolate: <><Ln d="M1 1H13V13H1ZM13 20L20 31H6Z" /><circle cx="25" cy="13" r="6" fill="none" stroke={G} strokeWidth="2" /></>,
};

const gearPath =
  "M13 1H19V5L22 6L25 3L29 7L26 10L27 13H31V19H27L26 22L29 25L25 29L22 26L19 27V31H13V27L10 26L7 29L3 25L6 22L5 19H1V13H5L6 10L3 7L7 3L10 6L13 5ZM16 11A5 5 0 1 0 16 21A5 5 0 1 0 16 11Z";
const Gear = ({ size, c = "#f4f4f4" }) => (
  <svg width={size} height={size} viewBox="0 0 32 32" aria-hidden="true">
    <path d={gearPath} fill={c} fillRule="evenodd" />
  </svg>
);
const Caret = ({ w = 12, h = 8, c = G }) => (
  <svg width={w} height={h} viewBox="0 0 12 8" preserveAspectRatio="none" aria-hidden="true">
    <path d="M0 0H12L6 8Z" fill={c} />
  </svg>
);
const Art = ({ name, size = 32 }) => (
  <svg width={size} height={size} viewBox={`0 0 ${size} ${size}`} overflow="visible" aria-hidden="true">
    {art[name]}
  </svg>
);
const DockIcon = () => (
  <svg width="24" height="28" viewBox="0 0 24 28" aria-hidden="true">
    <Ln d="M10 9V2H23V27H10V19" c="#e6e6e6" />
    <Fl d="M9 0H24V5H9ZM1 14L8 8V20Z" c="#e6e6e6" />
    <Ln d="M5 14H14" c="#e6e6e6" />
  </svg>
);
const PlusIcon = ({ size = 22 }) => (
  <svg width={size} height={size} viewBox="0 0 22 22" aria-hidden="true">
    <Ln d="M11 0V22M0 11H22" />
  </svg>
);
const FoldIcon = ({ right }) => (
  <svg width="14" height="12" viewBox="0 0 14 12" aria-hidden="true">
    <Ln d={right ? "M1 1L6 6L1 11M8 1L13 6L8 11" : "M6 1L1 6L6 11M13 1L8 6L13 11"} c="#a5a8ad" w={1.5} />
  </svg>
);
const LockIcon = ({ c = G }) => (
  <svg width="14" height="20" viewBox="0 0 14 20" aria-hidden="true">
    <Ln d="M3 9V5Q3 1 7 1T11 5V9" c={c} />
    <path d="M0 9H14V20H0ZM6 12V18H8V12Z" fill={c} fillRule="evenodd" />
  </svg>
);
const SnowIcon = ({ c = G }) => (
  <svg width="18" height="18" viewBox="-9 -9 18 18" aria-hidden="true">
    <Snow c={c} />
  </svg>
);

/* ---------- data ---------- */

const topGroups = [
  ["newfile", "open*", "save", "saveas"],
  ["undo", "redo"],
  ["print", "batch*", "pagesetup", "layoutedit"],
  ["importf", "exportf", "attach", "saveweb"],
  ["zoomwin", "pan", "orbit"],
  ["props", "qselect", "addsel", "replace", "audit", "count*"],
  ["compare", "share*", "activity*"],
];

// L: = large tool, "+" = flyout, "*" = badge, "-" = empty cell
const toolSets = [
  { title: "Draw", tools: ["L:line", "L:polyline", "L:circle+", "L:rect+", "arc+", "spline+", "xline+", "ray+", "ellipse+", "cloud+", "ex+", "breakline"] },
  { title: "Hatch", tools: ["L:hatch", "L:hatch2+", "L:gradient", "boundary", "wipeout", "region"] },
  { title: "Block", tools: ["L:insert", "L:create", "L:editblock", "L:attredit+", "tag", "blockpal", "blocksave", "blockadd", "tagsync", "tagsel", "blockswap"] },
  { title: "Modify", tools: ["L:move", "copy", "rotate", "L:trim+", "fillet+", "array+", "mirror", "stretchsel", "offset", "extrude", "stretch", "cube", "scale", "lengthen+", "join", "align", "explode", "purge"] },
  { title: "Text", tools: ["L:mtext", "L:textstyle", "textA", "spell", "field", "pdftext", "singletext", "findtext", "fieldupd", "pdfset"] },
  { title: "Dimension", tools: ["L:dim", "L:dimstyle", "linear+", "center+", "dimspace", "dimruler", "baseline+", "tolerance", "inspect", "oblique+"] },
  { title: "Leader", tools: ["L:leader", "L:leaderstyle", "leadadd", "leadalign", "leadcollect", "-", "leaddel", "leadgroup"] },
  { title: "Table", tools: ["L:table*", "L:tablestyle*", "link", "download", "-", "-", "extract", "tableupd"] },
  { title: "Parametric", tools: ["L:perp+", "autocon", "conshow", "L:dimlock+", "dimconv", "dimshow", "conhalf", "conhide", "dimhalf", "dimhide"] },
];

const layerTools = ["lyset", "lymatch", "lyprev", "lyiso", "lyuniso", "lyfreeze", "lyoff", "lylock", "lyunlock"];

const layers = [
  { name: "0", color: "#ffffff" },
  { name: "auxiliar", color: "#f04023", selected: true },
  { name: "Defpoints", color: "#ffffff", frozen: true },
  { name: "imagem", color: "#ffffff" },
  { name: "paredes", color: "#f59c38" },
];

const annotation = [
  ["Text style", "style1"],
  ["Dimension style", "Copy of Sta..."],
  ["Detail View st...", "Metric50"],
  ["Multileader st...", "Standard"],
  ["Section View...", "Metric50"],
  ["Table style", "Standard"],
];

const statusTools = ["grid", "ortho", "polar", "dyn", "lwt", "transp", "cycle", "otrack", "osnap", "prevv", "maxv", "nextv", "annvis", "annauto", "isolate"];

/* ---------- the scanned sheet ---------- */

const Chair = ({ r }) => (
  <g transform={`rotate(${r}) translate(0 -31)`}>
    <path d="M-5 4C-7 0 -7 -3 -5 -6L-3 -7L-2 -4H2L3 -7L5 -6C7 -3 7 0 5 4Q0 8 -5 4Z" fill="none" stroke="#999" />
  </g>
);
const label = { fontFamily: "Liberation Sans, sans-serif", fontSize: 9, fill: "#777" };
const caption = { fontFamily: "Liberation Serif, serif", fontStyle: "italic", fontSize: 11, fill: "#555", stroke: "#555", strokeWidth: 0.3 };

function HousePlan() {
  return (
    <SheetSvg width="660" height="810" viewBox="0 0 660 810" role="img" aria-label="House sections and first-floor plan">
      <rect x="9" y="11" width="640" height="785" fill="#fdfdfd" />
      <g transform="scale(.42093 .33333)" fill="none" stroke="#8c8c8c" strokeWidth="1.5">
        <g stroke="#b0b0b0" strokeWidth="1">
          <path vectorEffect="non-scaling-stroke" d="M404 310h46v54h-46zM414 364L450 312M270 360h12v8h-12M274 368V392M1300 113h52v50h-52zM1300 136h52M1300 143h52M1398 178V395M1388 175H1400" />
          <path vectorEffect="non-scaling-stroke" d="M347 797V566M349 442L577 560M512 522L562 548M562 548V566M436 726h36l-6 28h-24zM451 754V794M457 754V794M983 801V602H1085M1015 602V801M1088 560L1326 446M1148 546V526L1222 490M1260 510V784M1217 530V784" />
          <path vectorEffect="non-scaling-stroke" d="M262 846L1534 849M262 852L258 1600L256 2280M827 926C680 935 560 1000 480 1090C400 1180 345 1270 310 1390C290 1470 282 1530 282 1600V2284M824 960C700 968 610 1010 540 1060C470 1115 430 1160 398 1212M354 1350C320 1430 308 1520 308 1620V2284M336 1640V2284M256 2284L1534 2288M416 1956V2090M424 1956V2090M563 2130V2210M476 2240V2284" />
          <path vectorEffect="non-scaling-stroke" d="M832 1060H1060M868 1018H957V1058H868ZM898 1020h35v34h-35zM872 1022h22v32h-22zM1068 996H1154M1128 1116h24v38h-24zM1230 1014V1174H1284V1014M1284 1028H1374M1284 1080H1374M1284 1092H1374M1236 1106a15 18 0 1 0 30 0a15 18 0 1 0 -30 0M1218 1026V1064H1230V1026ZM1218 1032C1195 1032 1185 1040 1185 1046S1200 1060 1218 1058M1376 1076V1200M1384 1076V1200M1370 1138H1390M1310 1216h28v36h-28zM822 1074V1138M1062 1074V1138M1068 1074V1138M1060 1060V1206" />
          <path vectorEffect="non-scaling-stroke" strokeDasharray="3 2" d="M590 1760L412 1890M608 1790L426 1918" />
          <path vectorEffect="non-scaling-stroke" d="M625 1420C650 1380 700 1320 765 1300M1220 1800V1925M885 2020V2144H850M852 2082a15 18 0 1 0 30 0a15 18 0 1 0 -30 0M850 2158h12v40h-12M862 2164C905 2160 905 2198 862 2196M1138 2020V2090M1172 2020V2210M415 1890L430 1876L442 1908L426 1918M378 1282L404 1300M340 1330L398 1230M384 1356L432 1260" />
        </g>
        <path vectorEffect="non-scaling-stroke" d="M347 36V377H322V384H296V393H263V402H219M358 36L568 166L575 163V146L1228 149L1238 152V177H1374V150H1387V208L1388 395H1534M362 52L575 187V366H362ZM586 150V383L1224 386V150M1236 190H1376V208L1384 212V300H1376V370L1274 368M1376 36V150M1388 36V150" />
        <path vectorEffect="non-scaling-stroke" d="M1236 190V364M1274 190V368M1236 220h38M1236 244h38M1236 268h38M1236 292h38M1236 316h38M1236 340h38M1236 364h38M632 208H772V374H632ZM632 212H772M694 208V372M768 208V374" />
        <path vectorEffect="non-scaling-stroke" d="M235 803L347 802L349 795L515 792V563M349 442V566H361V464L575 604V784L515 786M349 442L568 579L577 577V562L1087 564L1088 577L1102 582L1326 446V628H1313V472L1097 608V787H1154V570M588 564V799L1085 801V564M523 570V625H515M480 658h24v31h-24zM1160 565V787H1313V716H1326V804L1438 805M1316 628V716M1323 628V716M1210 535V787M1162 624H1260M1217 574H1260M1217 748H1260M1045 604V800M1045 604H1085" />
        <path vectorEffect="non-scaling-stroke" d="M825 856V996M820 996C700 1000 600 1050 530 1110C480 1155 450 1195 432 1234L398 1213L342 1333L380 1360C350 1440 338 1520 338 1610C342 1780 390 1930 460 2030C500 2085 530 2110 562 2128L580 2124C540 2095 500 2055 470 2010C400 1910 352 1760 351 1610C351 1510 364 1420 392 1360L356 1332L400 1232L440 1256C480 1190 520 1140 580 1092C650 1040 720 1014 822 1010" />
        <path vectorEffect="non-scaling-stroke" d="M820 996V1074H828V1010M820 1138V1214H1070V1138H1060V1206H830V1138ZM828 996H990V1010H1060V1074H1068V1002L990 996M870 1002H915M950 1002H990M886 1206V1170H1060M1000 1170V1206M1154 1170V996H1386V1076H1376V1012H1166V1168M1148 1170h16v26h-16zM1118 1210H1154V1196M1118 1214H1166V1196M1202 1204H1386V1544H1376V1216H1202Z" />
        <path vectorEffect="non-scaling-stroke" d="M760 1290C780 1284 800 1281 820 1281H1272V1295H1232V1786H1266V1834H1298V1826H1306V1862H1384V1876H1298V1836H1256V1797H1220V1295H822C800 1295 780 1298 764 1303ZM606 1362L760 1290M610 1368L764 1303M606 1362C612 1400 606 1430 595 1450C560 1530 560 1620 570 1690C590 1780 630 1840 700 1892L704 1884C640 1835 600 1770 582 1690C570 1600 575 1520 625 1420L606 1362M700 1886L740 1908M698 1893L736 1917M736 1917C765 1932 790 1940 820 1940H1248V1926H822C795 1926 765 1920 740 1906Z" />
        <path vectorEffect="non-scaling-stroke" d="M1272 1295V1653H1232M1232 1366h42M1232 1438h42M1232 1509h42M1232 1580h42M1248 1934H1298M1298 1926H1384V2049H1374V1940H1298ZM1302 1940C1300 2000 1270 2050 1228 2072V2094H1172M1296 1942C1294 1998 1266 2042 1226 2066M1376 1544V1672H1384V1862M1376 1672V1862M1376 2049V2178H1384V2224M1384 2049V2178" />
        <path vectorEffect="non-scaling-stroke" d="M416 2088V2224H476V2242H568V2224H628V2238H702V2224H892V2210H424V2090M484 2210v24h80v-24M508 2210v22M534 2210v22M636 2210v18h58v-18M416 2092H486M696 2210V2056H724V2034H752V2012H892M700 2210V2062H728V2040H756M838 2016V2210M850 2016V2210M936 2016V2224M946 2020V2210M810 2017H892M920 2012H1172V2018H946M892 2218H934M934 2224H1014V2210H946M1014 2218H1118M1118 2210H1212V2224H1118ZM1134 2088h38v62h-38V2210M1132 2092V2020M1212 2218H1250M1250 2210H1374V2178M1250 2224H1384M1250 2210V2224" />
      </g>
      <g transform="translate(268 398)">
        <ellipse rx="23" ry="24" fill="none" stroke="#aaa" />
        {[0, 45, 90, 135, 180, 225, 270, 315].map((r) => (
          <Chair key={r} r={r} />
        ))}
      </g>
      <g fill="none" stroke="#888">
        <circle cx="430" cy="343" r="2.5" />
        <circle cx="427" cy="349" r="2.5" />
        <circle cx="434" cy="349" r="2.5" />
        <circle cx="41" cy="715" r="20" />
        <path d="M41 695V735" />
        <path d="M20 715L61 713" stroke="#555" strokeWidth="2" />
        <circle cx="110" cy="282" r="2" />
        <circle cx="107" cy="762" r="2" />
        <circle cx="348" cy="287" r="1" />
        <circle cx="348" cy="309" r="1" />
      </g>
      <text x="197" y="115" {...label}>main room</text>
      <text x="551" y="119" {...label}>study</text>
      <text x="515" y="256" {...label}>bedroom</text>
      <text x="382" y="376" {...label}>kitchen</text>
      <text x="541" y="388" {...label}>bathroom</text>
      <text x="175" y="519" {...label}>main room</text>
      <text x="545" y="520" {...label}>study</text>
      <text x="309" y="709" {...label}>storage</text>
      <text x="420" y="710" {...label}>bedroom</text>
      <text x="523" y="712" {...label}>bedroom</text>
      <text x="11" y="718" {...label}>N</text>
      <text x="148" y="141" {...caption}>North-south section; scale:</text>
      <text x="277" y="141" {...caption}>1/150.</text>
      <text x="147" y="278" {...caption}>East-west section.</text>
      <text x="110" y="775" {...caption}>Plot and first-floor plan; scale:</text>
      <text x="261" y="775" {...caption}>1/150.</text>
      <g fill="none" stroke="#e8372b" shapeRendering="crispEdges">
        <path d="M10 784.5H646" stroke="#000" />
        <rect x="9" y="11" width="640" height="785" strokeWidth="2" />
        <path d="M449.5 12V794M10 329.5H646M10 345.5H646" />
      </g>
    </SheetSvg>
  );
}

/* ---------- parts ---------- */

function ToolItem({ spec }) {
  if (spec === "-") return <span />;
  const large = spec.startsWith("L:");
  const name = spec.replace(/^L:|[+*]/g, "");
  return (
    <Tool type="button" $large={large} aria-label={name}>
      <Art name={name} size={large ? 64 : 32} />
      {spec.endsWith("+") && <Flyout $large={large} />}
      {spec.endsWith("*") && <Badge $x={large ? 68 : 32} $y={large ? 0 : -4} />}
    </Tool>
  );
}

function Picker({ id, value, dim, ...rest }) {
  return (
    <SelectWrap {...rest}>
      <Select id={id} aria-label={id ? undefined : value} defaultValue={value} disabled={dim}>
        <option>{value}</option>
      </Select>
      <Caret c={dim ? "#737884" : G} />
    </SelectWrap>
  );
}

function LeftPanel() {
  return (
    <Left>
      <Workspaces>
        <WorkTab type="button" $active>Drafting</WorkTab>
        <WorkTab type="button">Modeling</WorkTab>
        <FoldTab type="button" aria-label="Collapse tool sets"><FoldIcon /></FoldTab>
      </Workspaces>
      {toolSets.map((set) => (
        <ToolSet key={set.title}>
          <SetHeader>
            <SetTitle type="button">
              <Caret w={16} h={9} c="#f4f4f4" />
              {set.title}
            </SetTitle>
            <PlainButton type="button" aria-label={`${set.title} settings`}>
              <Gear size={18} />
            </PlainButton>
          </SetHeader>
          <ToolGrid>
            {set.tools.map((spec, i) => (
              <ToolItem key={i} spec={spec} />
            ))}
          </ToolGrid>
        </ToolSet>
      ))}
      <LeftFooter>
        <PlainButton type="button" aria-label="Add tool set"><PlusIcon /></PlainButton>
        <PlainButton type="button" aria-label="Manage tool sets">
          <svg width="26" height="22" viewBox="0 0 26 22" aria-hidden="true">
            <Ln d="M5 2H26M5 8H26M5 20H26" />
            <Fl d="M0 12H18V16H0ZM20 15L23 11L26 15Z" />
          </svg>
        </PlainButton>
      </LeftFooter>
    </Left>
  );
}

function CommandLine() {
  return (
    <Command>
      <History>
        <HistoryLines>
          <p>Command: _LAYOUT</p>
          <p>Enter layout option [Copy/Delete/New/Template/Rename/SAveas/Set/?] &lt;set&gt;: _S</p>
          <p>Enter layout to make current &lt;A3rd&gt;: Layout1</p>
          <p>Regenerating layout.</p>
        </HistoryLines>
        <HistoryThumb />
      </History>
      <Prompt>
        <PromptMark type="button" aria-label="Recent commands">
          <svg width="28" height="22" viewBox="0 0 28 22" aria-hidden="true">
            <Ln d="M1 2L9 7L1 12M15 17H28" c="#c9c9c9" w={2.5} />
          </svg>
          <Caret c="#b5b5b5" />
        </PromptMark>
        <PromptInput type="text" placeholder="Type a command" aria-label="Command" />
        <Caret c="#8e939b" />
        <PlainButton type="button" aria-label="Share">
          <svg width="26" height="28" viewBox="0 0 26 28" aria-hidden="true">
            <Ln d="M9 9H1V26H25V9H17M7 9V26" />
            <Ln d="M13 4V17" c={B} />
            <Fl d="M13 0L18 7H8Z" c={B} />
          </svg>
        </PlainButton>
      </Prompt>
    </Command>
  );
}

function LayersPanel() {
  return (
    <LayersSection>
      <PanelHead>
        <PanelTitle>Layers</PanelTitle>
        <PlainButton type="button" aria-label="Undock layers"><DockIcon /></PlainButton>
      </PanelHead>
      <LayerTools>
        {layerTools.map((name) => (
          <PlainButton key={name} type="button" aria-label={name}><Art name={name} /></PlainButton>
        ))}
      </LayerTools>
      <LayerCombo>
        <Disc />
        <LockIcon c="#6d7484" />
        <SnowIcon c="#6d7484" />
        <Swatch $color="#f04023" />
        <Select aria-label="Current layer" defaultValue="auxiliar"><option>auxiliar</option></Select>
        <Caret />
      </LayerCombo>
      <Picker value="Unsaved Layer State" $height={54} $margin="2px 2px 0" />
      <HideRow type="button">
        <svg width="18" height="12" viewBox="0 0 18 12" aria-hidden="true"><Ln d="M2 2L9 9L16 2" w={3} /></svg>
        Hide Layer List
      </HideRow>
      <ListBox>
        <ListBody>
          <LayerTable>
            <colgroup>
              <col width="62" />
              <col />
              <col width="44" />
              <col width="38" />
            </colgroup>
            <thead>
              <tr>
                <HeadCell aria-label="Visible">
                  <svg width="26" height="16" viewBox="0 0 26 16" aria-hidden="true">
                    <path d="M1 8Q13 -6 25 8Q13 22 1 8Z" fill={G} />
                    <circle cx="13" cy="8" r="5" fill="#2f323e" />
                    <circle cx="13" cy="8" r="3" fill={G} />
                  </svg>
                </HeadCell>
                <HeadCell $sort>
                  <HeadName>
                    <svg width="16" height="16" viewBox="0 0 16 16" aria-hidden="true">
                      <Ln d="M1 1H15V15H1Z" />
                      <Fl d="M1 15L15 1V15Z" />
                    </svg>
                    Name
                    <SortMarks width="12" height="18" viewBox="0 0 12 18" aria-hidden="true">
                      <Fl d="M1 6L6 0L11 6ZM1 11H11L6 17Z" />
                    </SortMarks>
                    <SortFlag />
                  </HeadName>
                </HeadCell>
                <HeadCell aria-label="Frozen"><SnowIcon /></HeadCell>
                <HeadCell aria-label="Locked"><LockIcon /></HeadCell>
              </tr>
            </thead>
            <tbody>
              {layers.map((l) => (
                <LayerRow key={l.name} $selected={l.selected}>
                  <td><Disc $list /></td>
                  <td><LayerName><Swatch $color={l.color} />{l.name}</LayerName></td>
                  <td>{l.frozen && <SnowIcon />}</td>
                  <td />
                </LayerRow>
              ))}
            </tbody>
          </LayerTable>
        </ListBody>
        <ScrollTrack><ScrollThumb /></ScrollTrack>
      </ListBox>
      <ListTools>
        <PlainButton type="button" aria-label="New layer">
          <svg width="28" height="26" viewBox="0 0 28 26" aria-hidden="true">
            <Ln d="M10 2H24L15 11H2Z" c="#eee" />
            <Ln d="M26 7L17 17H2M26 13L17 24H2" c="#aaa" />
          </svg>
        </PlainButton>
        <PlainButton type="button" aria-label="Layer states">
          <svg width="30" height="30" viewBox="0 0 30 30" aria-hidden="true">
            <Ln d="M8 2H23L14 10H2Z" c="#eee" />
            <Ln d="M22 7L15 15H1M13 21H1" c="#ccc" />
            <Ln d="M13 15H29V28H13Z" c="#eee" fill={D} />
            <Ln d="M16 19H18M20 19H26M16 24H18M20 24H26" c="#eee" />
          </svg>
        </PlainButton>
        <PlainButton type="button" aria-label="New group">
          <svg width="28" height="22" viewBox="0 0 28 22" aria-hidden="true">
            <Fl d="M1 1H9L12 4H20V6H8L1 20ZM9 8H27L20 21H2Z" />
          </svg>
        </PlainButton>
        <PlainButton type="button" aria-label="New dynamic group">
          <svg width="28" height="22" viewBox="0 0 28 22" aria-hidden="true">
            <Fl d="M1 1H9L12 4H20V6H8L1 20ZM9 8H27L20 21H2Z" />
            <Fl d="M16 9L11 15H15L13 20L20 13H16L18 9Z" c={D} />
          </svg>
        </PlainButton>
        <Spacer />
        <PlainButton type="button" aria-label="Delete layer">
          <svg width="16" height="4" viewBox="0 0 16 4" aria-hidden="true"><Ln d="M0 2H16" c="#7d828c" w={4} /></svg>
        </PlainButton>
        <ColumnsButton type="button" aria-label="Columns">
          <svg width="20" height="16" viewBox="0 0 20 16" aria-hidden="true"><Ln d="M1 1H19V15H1ZM7 1V15M13 1V15" /></svg>
          <Caret w={10} h={6} />
        </ColumnsButton>
      </ListTools>
      <Search>
        <svg width="36" height="26" viewBox="0 0 36 26" aria-hidden="true">
          <circle cx="11" cy="11" r="9.5" fill="none" stroke="#222" strokeWidth="2" />
          <Ln d="M17 18L25 25" c="#222" w={3} />
          <Ln d="M24 10L29 15L34 10" c="#222" />
        </svg>
        <SearchInput type="search" placeholder="Search for layer" aria-label="Search for layer" />
      </Search>
    </LayersSection>
  );
}

function PropertiesPanel() {
  return (
    <PropsSection>
      <PanelHead>
        <PanelTitle>Properties</PanelTitle>
        <Segment>
          <SegButton type="button" $active>All</SegButton>
          <SegButton type="button">My</SegButton>
        </Segment>
        <PlainButton type="button" aria-label="Edit properties">
          <svg width="28" height="28" viewBox="0 0 28 28" aria-hidden="true">
            <Ln d="M20 12V1H1V23H12M5 7H16M5 12H16M5 17H12" c="#858a95" />
            <Fl d="M12 22L22 11L28 17L18 27L12 28Z" c="#858a95" />
          </svg>
        </PlainButton>
        <PlainButton type="button" aria-label="Undock properties"><DockIcon /></PlainButton>
      </PanelHead>
      <Picker value="Paper Space" dim $height={42} $margin="15px 4px 0 2px" $dim />
      <GroupHead type="button" $top={8}>
        <svg width="18" height="18" viewBox="0 0 18 18" aria-hidden="true"><Ln d="M6 3L13 9L6 15" c="#23272f" w={3} /></svg>
        General
      </GroupHead>
      <GroupHead type="button" $top={0}>
        <svg width="18" height="18" viewBox="0 0 18 18" aria-hidden="true"><Ln d="M2 6L9 12L16 6" c="#23272f" w={3} /></svg>
        Annotation
      </GroupHead>
      <PropRows>
        {annotation.map(([name, value], i) => (
          <PropRow key={name}>
            <PropLabel htmlFor={`style-${i}`}>{name}</PropLabel>
            <Picker id={`style-${i}`} value={value} $height={38} $margin="0" />
          </PropRow>
        ))}
      </PropRows>
    </PropsSection>
  );
}

export default function App() {
  return (
    <>
      <GlobalStyle />
      <Shell>
        <TopBar>
          {topGroups.map((group, i) => (
            <TopGroup key={i}>
              {group.map((spec) => {
                const name = spec.replace("*", "");
                return (
                  <PlainButton key={name} type="button" aria-label={name}>
                    <Art name={name} />
                    {spec.endsWith("*") && <Badge $x={28} $y={-6} />}
                  </PlainButton>
                );
              })}
            </TopGroup>
          ))}
        </TopBar>
        <Body>
          <LeftPanel />
          <Work>
            <WorkRow>
              <Center>
                <DocTabs>
                  <SquareTab type="button" aria-label="Start">
                    <svg width="28" height="28" viewBox="0 0 28 28" aria-hidden="true">
                      <Fl d="M0 0H14V14H0Z" c={L} />
                      <Fl d="M16 2H28V14H16ZM2 16H14V28H2ZM16 16H28V28H16Z" />
                    </svg>
                  </SquareTab>
                  <SquareTab type="button" aria-label="New drawing"><PlusIcon /></SquareTab>
                  <DocTab type="button">uhouse_autocad*</DocTab>
                </DocTabs>
                <Canvas>
                  <HousePlan />
                  <Ucs width="106" height="180" viewBox="0 0 106 180" role="img" aria-label="UCS icon">
                    <path d="M2 2V177H102Z M2 161H18V177 M6 54L18 66L31 54M18 66V79 M57 147L82 172M82 147L57 172" fill="none" stroke="#2a4fe0" strokeWidth="2" />
                  </Ucs>
                  <Cross width="146" height="146" viewBox="0 0 146 146" aria-hidden="true">
                    <path d="M73 0V67M73 79V146M0 73H67M79 73H146M67 67H79V79H67Z" fill="none" stroke="#111" strokeWidth="2" />
                  </Cross>
                  <CommandLine />
                </Canvas>
              </Center>
              <Right>
                <PanelTabs>
                  <PanelTab type="button" $active aria-label="Layers and properties">
                    <svg width="32" height="30" viewBox="0 0 32 30" aria-hidden="true">
                      <Fl d="M8 0H26L20 11H1Z" />
                      <Ln d="M25 7L20 15H1M23 12L16 21H1" w={3} />
                      <circle cx="25" cy="21" r="8" fill={D} />
                      <circle cx="25" cy="21" r="7" fill={G} />
                      <Ln d="M25 16V18M25 20V26" c={D} />
                    </svg>
                  </PanelTab>
                  <PanelTab type="button" aria-label="Sheet set">
                    <svg width="28" height="28" viewBox="0 0 28 28" aria-hidden="true">
                      <Fl d="M0 0H28V28H0Z" />
                      <Fl d="M0 0H28V6H0Z" c="#aaa" />
                      <Fl d="M3 8H9V14H3ZM11 8H17V14H11ZM19 8H25V14H19ZM3 16H9V22H3ZM11 16H17V22H11ZM19 16H25V22H19Z" c="#454a57" />
                      <Ln d="M4 25H24" c="#777" />
                    </svg>
                    <Badge $x={56} $y={-2} />
                  </PanelTab>
                  <TabFill />
                  <FoldTab type="button" $wide aria-label="Collapse panels"><FoldIcon right /></FoldTab>
                </PanelTabs>
                <LayersPanel />
                <PropertiesPanel />
              </Right>
            </WorkRow>
            <StatusBar>
              <LayoutTab type="button">Model</LayoutTab>
              <SquareTab type="button" aria-label="New layout"><PlusIcon /></SquareTab>
              <LayoutTab type="button">A3rd</LayoutTab>
              <LayoutTab type="button" $active>Layout1</LayoutTab>
              <Spacer />
              <Coords>0.309,&nbsp; 0.235, 0.000</Coords>
              <StatusTools>
                {statusTools.map((name) => {
                  const step = name === "prevv" || name === "nextv";
                  return (
                    <StatusButton key={name} type="button" aria-label={name} $on={name === "osnap"} $step={step}>
                      {step ? (
                        <svg width="14" height="24" viewBox="0 0 14 32" preserveAspectRatio="none" aria-hidden="true">{art[name]}</svg>
                      ) : (
                        <Art name={name} />
                      )}
                    </StatusButton>
                  );
                })}
                <StatusButton type="button" aria-label="Settings"><Gear size={30} c={G} /></StatusButton>
              </StatusTools>
            </StatusBar>
          </Work>
        </Body>
      </Shell>
    </>
  );
}

/* ---------- styles ---------- */

const GlobalStyle = createGlobalStyle`
  * { box-sizing: border-box; }
  body { margin: 0; background: #3c4452; }
  button, select, input { font: inherit; color: inherit; }
  p { margin: 0; }
`;

const Shell = styled.div`
  height: 100vh;
  display: flex;
  flex-direction: column;
  overflow: hidden;
  font-family: Inter, sans-serif;
  font-size: 22px;
  color: #f0f0f0;
`;

const TopBar = styled.header`
  flex: none;
  height: 82px;
  padding-top: 14px;
  display: flex;
  align-items: center;
  justify-content: center;
  gap: 96px;
  background: #3d4553;
  border-bottom: 2px solid #242a34;
`;

const TopGroup = styled.div`
  display: flex;
  gap: 34px;
`;

const PlainButton = styled.button`
  position: relative;
  display: flex;
  align-items: center;
  justify-content: center;
  padding: 0;
  border: 0;
  background: none;
`;

const Badge = styled.span`
  position: absolute;
  left: ${(p) => p.$x}px;
  top: ${(p) => p.$y}px;
  width: 20px;
  height: 20px;
  border: 2px solid #fff;
  border-radius: 50%;
  background: #e87743;
`;

const Body = styled.div`
  flex: 1;
  min-height: 0;
  display: flex;
`;

const Left = styled.aside`
  flex: none;
  width: 368px;
  display: flex;
  flex-direction: column;
  background: #3c4250;
`;

const Workspaces = styled.div`
  flex: none;
  display: flex;
  height: 44px;
  font-family: "Liberation Sans", sans-serif;
`;

const WorkTab = styled.button`
  width: 161px;
  padding: 0;
  border: 0;
  font-size: 24px;
  color: ${(p) => (p.$active ? "#f4f4f4" : "#9b9da2")};
  background: ${(p) => (p.$active ? "#3c4250" : "#2f323e")};
  box-shadow: ${(p) => (p.$active ? "none" : "0 2px #242a34, inset 2px 0 #242a34, inset -2px 0 #242a34")};
`;

const FoldTab = styled.button`
  flex: ${(p) => (p.$wide ? "none" : 1)};
  display: flex;
  align-items: center;
  justify-content: center;
  width: 48px;
  padding: 0;
  border: 0;
  border-left: ${(p) => (p.$wide ? "2px solid #242a34" : "0")};
  background: #3c4452;
  box-shadow: 0 2px #242a34;
`;

const ToolSet = styled.section`
  flex: none;
  margin: 0 8px;
  padding-bottom: 12px;
  border-bottom: 2px solid #242a34;
`;

const SetHeader = styled.div`
  display: flex;
  align-items: center;
  justify-content: space-between;
  height: 42px;
  padding: 2px 3px 0 1px;
`;

const SetTitle = styled.button`
  display: flex;
  align-items: center;
  gap: 9px;
  padding: 0;
  border: 0;
  background: none;
  font-family: "Liberation Sans", sans-serif;
  font-size: 20px;
  color: #f4f4f4;
`;

const ToolGrid = styled.div`
  display: grid;
  grid-template-columns: repeat(8, 44px);
  grid-template-rows: 44px 44px;
  grid-auto-rows: 48px;
  grid-auto-flow: row dense;
  align-items: end;
`;

const Tool = styled.button`
  position: relative;
  display: flex;
  align-items: center;
  justify-content: center;
  width: ${(p) => (p.$large ? 88 : 44)}px;
  height: ${(p) => (p.$large ? 88 : 44)}px;
  grid-column: span ${(p) => (p.$large ? 2 : 1)};
  grid-row: span ${(p) => (p.$large ? 2 : 1)};
  padding: 0;
  border: 0;
  background: none;
`;

const Flyout = styled.span`
  position: absolute;
  right: ${(p) => (p.$large ? 2 : 0)}px;
  bottom: ${(p) => (p.$large ? 2 : 0)}px;
  border-left: 8px solid transparent;
  border-bottom: 8px solid #999;
`;

const LeftFooter = styled.div`
  display: flex;
  gap: 36px;
  margin-top: auto;
  padding: 0 0 12px 31px;
`;

const Work = styled.div`
  flex: 1;
  min-width: 0;
  display: flex;
  flex-direction: column;
`;

const WorkRow = styled.div`
  flex: 1;
  min-height: 0;
  display: flex;
`;

const Center = styled.main`
  flex: 1;
  min-width: 0;
  display: flex;
  flex-direction: column;
`;

const DocTabs = styled.div`
  flex: none;
  display: flex;
  height: 46px;
  background: #3d4553;
  border-left: 2px solid #242a34;
  border-bottom: 2px solid #242a34;
`;

const SquareTab = styled.button`
  display: flex;
  align-items: center;
  justify-content: center;
  width: 47px;
  padding: 0;
  border: 0;
  border-right: 2px solid #242a34;
  background: none;
`;

const DocTab = styled.button`
  width: 258px;
  padding: 0 0 2px 6px;
  border: 0;
  border-right: 2px solid #242a34;
  background: #4e5a6e;
  font-family: "Noto Sans", sans-serif;
  font-size: 22px;
  font-weight: 600;
  text-align: left;
  color: #f4f4f4;
`;

const Canvas = styled.div`
  position: relative;
  flex: 1;
  overflow: hidden;
  background: #8a8a8a;
`;

const SheetSvg = styled.svg`
  position: absolute;
  left: 652px;
  top: 292px;
  filter: drop-shadow(0 4px 5px rgba(0, 0, 0, 0.12));
`;

const Ucs = styled.svg`
  position: absolute;
  left: 31px;
  bottom: 31px;
`;

const Cross = styled.svg`
  position: absolute;
  left: 1481px;
  top: 395px;
`;

const Command = styled.div`
  position: absolute;
  left: 50%;
  bottom: 0;
  width: 1000px;
  transform: translateX(-50%);
  font-family: "Noto Sans", sans-serif;
`;

const History = styled.div`
  position: relative;
  height: 114px;
  margin-left: 80px;
  padding: 12px 0 0 11px;
  background: #3d4553;
`;

const HistoryLines = styled.div`
  display: flex;
  flex-direction: column;
  justify-content: flex-end;
  height: 102px;
  overflow: hidden;
  font-size: 20px;
  line-height: 30px;
  color: #c3c5c9;
  white-space: nowrap;
`;

const HistoryThumb = styled.span`
  position: absolute;
  right: 11px;
  bottom: 4px;
  width: 8px;
  height: 40px;
  border-radius: 4px;
  background: #97999e;
`;

const Prompt = styled.div`
  display: flex;
  align-items: center;
  gap: 23px;
  height: 50px;
  padding: 0 20px 0 17px;
  background: #3d4553;
`;

const PromptMark = styled(PlainButton)`
  gap: 4px;
`;

const PromptInput = styled.input`
  flex: 1;
  padding: 0;
  margin-left: 6px;
  border: 0;
  outline: 0;
  background: none;
  font-size: 22px;
  font-style: italic;

  &::placeholder {
    color: #9da1a8;
    opacity: 1;
  }
`;

const Right = styled.aside`
  flex: none;
  width: 472px;
  display: flex;
  flex-direction: column;
  background: #3c4452;
`;

const PanelTabs = styled.div`
  flex: none;
  display: flex;
  height: 44px;
`;

const PanelTab = styled.button`
  position: relative;
  display: flex;
  align-items: center;
  justify-content: center;
  width: 105px;
  padding: 4px 0 0;
  border: 0;
  border-right: 2px solid #242a34;
  background: ${(p) => (p.$active ? "#3c4452" : "#2f323e")};
  box-shadow: ${(p) => (p.$active ? "-2px 0 #242a34" : "0 2px #242a34")};
`;

const TabFill = styled.div`
  flex: 1;
  background: #2f323e;
  box-shadow: 0 2px #242a34;
`;

const LayersSection = styled.section`
  flex: 1;
  min-height: 0;
  display: flex;
  flex-direction: column;
  padding: 1px 14px 18px 18px;
`;

const PropsSection = styled.section`
  flex: none;
  height: 500px;
  display: flex;
  flex-direction: column;
  padding: 0 14px 16px 18px;
  border-top: 2px solid #2a303b;
`;

const PanelHead = styled.div`
  flex: none;
  display: flex;
  align-items: center;
  gap: 20px;
  height: 32px;
  padding: 0 6px 0 2px;
`;

const PanelTitle = styled.h2`
  flex: 1;
  margin: 0;
  font-size: 24px;
  font-weight: 400;
`;

const LayerTools = styled.div`
  display: flex;
  gap: 16px;
  margin: 33px 0 21px 10px;
`;

const LayerCombo = styled.div`
  flex: none;
  display: flex;
  align-items: center;
  gap: 18px;
  height: 54px;
  padding: 0 8px 0 18px;
  border: 2px solid #2f3b40;
  border-radius: 5px;
  background: #4e5a6d;
`;

const SelectWrap = styled.div`
  flex: none;
  display: flex;
  align-items: center;
  height: ${(p) => p.$height}px;
  margin: ${(p) => p.$margin};
  padding: 0 8px 0 12px;
  border: 2px solid ${(p) => (p.$dim ? "#373f4b" : "#2f3b40")};
  border-radius: 5px;
  color: ${(p) => (p.$dim ? "#7f8490" : "#ffffff")};
  background: ${(p) => (p.$dim ? "#444c5d" : "#4e5a6d")};
`;

const Select = styled.select`
  flex: 1;
  min-width: 0;
  appearance: none;
  padding: 0;
  border: 0;
  outline: 0;
  background: none;
  font-weight: 500;
  opacity: 1;
`;

const Disc = styled.span`
  display: block;
  width: 16px;
  height: 16px;
  margin-left: ${(p) => (p.$list ? 28 : 0)}px;
  border-radius: 50%;
  background: #d9d9d9;
`;

const Swatch = styled.span`
  flex: none;
  width: 18px;
  height: 18px;
  margin-right: 4px;
  border: 2px solid #000;
  background: ${(p) => p.$color};
`;

const HideRow = styled.button`
  flex: none;
  display: flex;
  align-items: center;
  gap: 24px;
  height: 50px;
  margin-bottom: 6px;
  padding: 0 0 0 9px;
  border: 0;
  background: none;
  color: #cfd0d3;
`;

const ListBox = styled.div`
  flex: 1;
  min-height: 0;
  display: flex;
  flex-direction: column;
  margin: 0 6px 0 2px;
  border: 2px solid #343b48;
`;

const ListBody = styled.div`
  flex: 1;
  min-height: 0;
  overflow: hidden;
  background: #4e5a6c;
  border-bottom: 2px solid #2f3440;
`;

const LayerTable = styled.table`
  width: 100%;
  table-layout: fixed;
  border-collapse: collapse;

  td {
    padding: 0;
  }

  td svg {
    display: block;
    margin: 0 auto;
  }
`;

const HeadCell = styled.th`
  height: 46px;
  padding: 0;
  font-weight: 700;
  color: #dcdee2;
  background: ${(p) => (p.$sort ? "#4e5a6e" : "#2f323e")};
  border-bottom: 2px solid #2b303c;
  border-right: 2px solid #2b303c;

  &:last-child {
    border-right: 0;
  }

  svg {
    display: block;
    margin: 0 auto;
  }
`;

const HeadName = styled.div`
  position: relative;
  display: flex;
  align-items: center;
  gap: 14px;
  height: 44px;
  padding: 0 13px 0 9px;

  svg {
    margin: 0;
  }
`;

const SortMarks = styled.svg`
  && {
    margin-left: auto;
  }
`;

const SortFlag = styled.span`
  position: absolute;
  left: 50%;
  bottom: 0;
  margin-left: -6px;
  border: 6px solid transparent;
  border-top: 0;
  border-bottom: 9px solid #4a96ee;
`;

const LayerRow = styled.tr`
  height: 38px;
  color: #fff;
  font-weight: 500;
  background: ${(p) => (p.$selected ? "#919eaf" : "transparent")};
`;

const LayerName = styled.div`
  display: flex;
  align-items: center;
  gap: 13px;
`;

const ScrollTrack = styled.div`
  flex: none;
  height: 30px;
  padding: 12px 0 0 5px;
`;

const ScrollThumb = styled.div`
  width: 34%;
  height: 10px;
  border-radius: 5px;
  background: #8b8f9a;
`;

const ListTools = styled.div`
  flex: none;
  display: flex;
  align-items: center;
  gap: 32px;
  height: 50px;
  padding: 0 18px 0 17px;
`;

const ColumnsButton = styled(PlainButton)`
  gap: 7px;
`;

const Spacer = styled.div`
  flex: 1;
`;

const Search = styled.div`
  flex: none;
  display: flex;
  align-items: center;
  gap: 10px;
  height: 40px;
  margin: 0 8px 0 4px;
  padding: 0 9px;
  border-radius: 10px;
  background: #fff;
`;

const SearchInput = styled.input`
  flex: 1;
  min-width: 0;
  padding: 0;
  border: 0;
  outline: 0;
  background: none;
  font-size: 26px;
  color: #222;

  &::placeholder {
    color: #b9b9b9;
    opacity: 1;
  }
`;

const Segment = styled.div`
  display: flex;
  width: 120px;
  height: 28px;
  border: 2px solid #2c323d;
`;

const SegButton = styled.button`
  flex: 1;
  padding: 0;
  border: 0;
  font-size: 16px;
  font-weight: 500;
  color: ${(p) => (p.$active ? "#fff" : "#8d919b")};
  background: ${(p) => (p.$active ? "#4e5a6d" : "#3c4250")};
`;

const GroupHead = styled.button`
  flex: none;
  display: flex;
  align-items: center;
  gap: 23px;
  height: 62px;
  margin-top: ${(p) => p.$top}px;
  padding: 0 0 0 8px;
  border: 0;
  background: none;
  font-weight: 700;
  color: #d7d8db;
`;

const PropRows = styled.div`
  flex: 1;
  min-height: 0;
  overflow: hidden;
  display: flex;
  flex-direction: column;
  gap: 8px;
  padding-top: 4px;
`;

const PropRow = styled.div`
  flex: none;
  display: grid;
  grid-template-columns: 154px 1fr;
  column-gap: 20px;
  align-items: center;
  padding: 0 12px 0 68px;
`;

const PropLabel = styled.label`
  text-align: right;
  white-space: nowrap;
  color: #d2d3d6;
`;

const StatusBar = styled.footer`
  flex: none;
  display: flex;
  height: 48px;
  border: 2px solid #242a34;
  border-right: 0;
  background: #3d4553;
`;

const LayoutTab = styled.button`
  width: 118px;
  padding: 0 0 4px;
  border: 0;
  border-right: 2px solid #242a34;
  font-family: "Noto Sans", sans-serif;
  font-size: 22px;
  font-weight: ${(p) => (p.$active ? 600 : 400)};
  color: ${(p) => (p.$active ? "#fff" : "#a3a6ac")};
  background: ${(p) => (p.$active ? "#4e5a6e" : "none")};
`;

const Coords = styled.div`
  display: flex;
  align-items: center;
  padding: 0 4px 0 18px;
  border-left: 2px solid #242a34;
  font-family: "Noto Sans", sans-serif;
  font-size: 24px;
  white-space: nowrap;
  color: #c3c5c9;
`;

const StatusTools = styled.div`
  display: flex;
  align-items: center;
  padding-right: 8px;
`;

const StatusButton = styled.button`
  display: flex;
  align-items: center;
  justify-content: center;
  width: ${(p) => (p.$on ? 40 : p.$step ? 38 : 44)}px;
  height: 40px;
  margin: 0 ${(p) => (p.$on ? 2 : 0)}px;
  padding: 0;
  border: 0;
  background: ${(p) => (p.$on ? "#6790c0" : "none")};
`;
